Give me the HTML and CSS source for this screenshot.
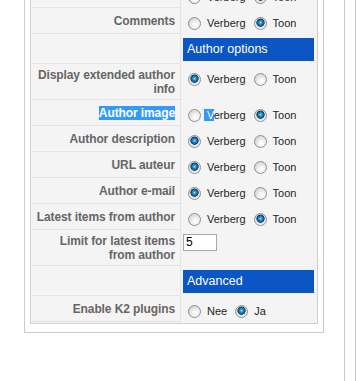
FILE: index.html
```html
<!DOCTYPE html>
<html>
<head>
<meta charset="utf-8">
<link rel="stylesheet" href="styles.css">
</head>
<body>
<div class="page">
  <div class="fieldset">
    <div class="params">
      <div class="key row">&nbsp;</div>
      <div class="val radios"><span class="rb"></span><span class="lbl">Verberg</span><span class="rb on"></span><span class="lbl">Toon</span></div>

      <div class="key row">Comments</div>
      <div class="val radios"><span class="rb"></span><span class="lbl">Verberg</span><span class="rb on"></span><span class="lbl">Toon</span></div>

      <div class="key hdr"></div>
      <div class="val"><div class="section">Author options</div></div>

      <div class="key tall">Display extended author info</div>
      <div class="val radios"><span class="rb on"></span><span class="lbl">Verberg</span><span class="rb"></span><span class="lbl">Toon</span></div>

      <div class="key row"><span class="sel">Author image</span></div>
      <div class="val radios"><span class="rb"></span><span class="lbl"><span class="sel selv">V</span>erberg</span><span class="rb on"></span><span class="lbl">Toon</span></div>

      <div class="key row">Author description</div>
      <div class="val radios"><span class="rb on"></span><span class="lbl">Verberg</span><span class="rb"></span><span class="lbl">Toon</span></div>

      <div class="key row">URL auteur</div>
      <div class="val radios"><span class="rb on"></span><span class="lbl">Verberg</span><span class="rb"></span><span class="lbl">Toon</span></div>

      <div class="key row">Author e-mail</div>
      <div class="val radios"><span class="rb on"></span><span class="lbl">Verberg</span><span class="rb"></span><span class="lbl">Toon</span></div>

      <div class="key row">Latest items from author</div>
      <div class="val radios"><span class="rb"></span><span class="lbl">Verberg</span><span class="rb on"></span><span class="lbl">Toon</span></div>

      <div class="key tall">Limit for latest items from author</div>
      <div class="val inputcell"><span class="textbox">5</span></div>

      <div class="key hdr"></div>
      <div class="val"><div class="section">Advanced</div></div>

      <div class="key row">Enable K2 plugins</div>
      <div class="val radios"><span class="rb"></span><span class="lbl">Nee</span><span class="rb on"></span><span class="lbl">Ja</span></div>
    </div>
  </div>
  <div class="side"></div>
</div>
</body>
</html>
```

FILE: styles.css
```css
html, body {
  margin: 0;
  padding: 0;
  background: #fff;
  overflow: hidden;
}

body {
  font-family: "Liberation Sans", Arial, sans-serif;
  height: 381px;
}

.page {
  display: flex;
  align-items: flex-start;
  height: 381px;
}

.fieldset {
  box-sizing: border-box;
  width: 300px;
  margin-left: 24px;
  margin-top: -20px;
  border: 1px solid #cccccc;
  border-top: none;
  padding: 0 5px 8px 5px;
}

.params {
  display: grid;
  grid-template-columns: 149px 135px;
  border: 1px solid #d0d0d0;
  padding: 1px;
  background: #f4f4f4;
}

.key {
  box-sizing: border-box;
  display: flex;
  align-items: center;
  justify-content: flex-end;
  text-align: right;
  padding: 0 5px 0 2px;
  border-right: 1px solid #e4e4e4;
  border-bottom: 1px solid #e4e4e4;
  font-size: 12px;
  line-height: 14px;
  letter-spacing: -0.1px;
  font-weight: bold;
  color: #666666;
}

.row { height: 26px; }
.tall { height: 36px; }
.hdr { height: 30px; }

.val {
  box-sizing: border-box;
  padding: 0 2px;
}

.radios {
  display: flex;
  align-items: center;
  padding: 9px 0 0 7px;
  height: 13px;
  box-sizing: content-box;
  font-size: 11px;
  line-height: 13px;
  color: #1e1e1e;
}

.lbl {
  margin-left: 6px;
  margin-right: 8px;
  white-space: nowrap;
}

.rb {
  display: inline-block;
  flex: none;
  box-sizing: border-box;
  width: 13px;
  height: 13px;
  border-radius: 50%;
  border: 1px solid #909090;
  background: radial-gradient(circle at 60% 65%, #ffffff 0, #f4f4f4 3px, #dcdcdc 6px);
}

.rb.on {
  background: radial-gradient(circle at 50% 42%, #a6e4ff 0, #2b9ad6 1.4px, #1667a0 2.8px, #0e3d5e 3.8px, #d8d8d8 4.4px, #f2f2f2 6px);
}

.section {
  margin-top: 4px;
  height: 23px;
  line-height: 23px;
  background: #0b55c4;
  color: #ffffff;
  font-size: 12.5px;
  padding-left: 4px;
}

.inputcell {
  padding-top: 4px;
  padding-left: 2px;
}

.textbox {
  display: block;
  box-sizing: border-box;
  width: 34px;
  height: 17px;
  border: 1px solid #a8a8a8;
  background: #fff;
  font-size: 12px;
  line-height: 15px;
  padding-left: 2px;
  color: #000;
}

.sel {
  background: #3399ff;
  color: #ffffff;
}

.selv {
  padding-left: 3px;
  margin-left: -3px;
}

.side {
  flex: none;
  align-self: stretch;
  margin-left: 20px;
  width: 10px;
  border-left: 1px solid #c8c8c8;
  border-right: 1px solid #c8c8c8;
}
```
